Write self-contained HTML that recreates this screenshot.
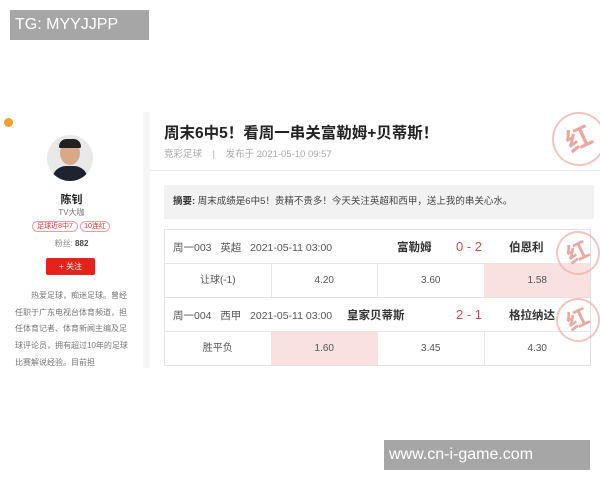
<!DOCTYPE html>
<html><head><meta charset="utf-8"><style>
*{margin:0;padding:0;box-sizing:border-box}
body{width:600px;height:480px;background:#fff;position:relative;overflow:hidden;font-family:"Liberation Sans","Noto Sans CJK SC",sans-serif;color:#333}
.a{position:absolute}
.tg{left:10px;top:10px;width:139px;height:30px;background:#a6a6a6;color:#fff;font-size:16px;line-height:30px;padding-left:5px}
.wm{left:384px;top:440px;width:206px;height:30px;background:#a6a6a6;color:#fff;font-size:16px;line-height:30px;padding-left:5px}
.strip{left:143px;top:112px;width:7px;height:256px;background:#f5f5f5}
.c{text-align:center}
.tbl{left:164px;width:427px;border:1px solid #e2e2e2;background:#fff}
.row1{height:34px;border-bottom:1px solid #e6e6e6;position:relative;font-size:10.5px}
.row2{height:33px;display:flex}
.row2 div{flex:1;border-right:1px solid #e6e6e6;text-align:center;line-height:33px;font-size:10px;color:#555}
.row2 div:last-child{border-right:none}
.pk{background:#f9e1e1}
.stamp{width:44px;height:44px;border:2px solid #eeb2ad;border-radius:50%;color:#e58a83;font-size:22px;font-weight:bold;text-align:center;line-height:40px;transform:rotate(-25deg);opacity:.75}
.sc{color:#c0504d;font-size:13px;top:9px;left:291px}
.tm{top:9px;font-weight:bold;font-size:11.5px}
</style></head><body>
<div class="a tg">TG: MYYJJPP</div>
<div class="a" style="left:4px;top:118px;width:9px;height:9px;border-radius:50%;background:#f0a030"></div>
<div class="a" style="left:47px;top:135px;width:46px;height:46px;border-radius:50%;background:#e9e9ea;overflow:hidden">
 <div class="a" style="left:13px;top:6px;width:20px;height:24px;border-radius:50%;background:#d9a889"></div>
 <div class="a" style="left:12px;top:4px;width:22px;height:9px;border-radius:10px 10px 2px 2px;background:#222"></div>
 <div class="a" style="left:5px;top:31px;width:36px;height:20px;border-radius:14px 14px 0 0;background:#1f2330"></div>
</div>
<div class="a c" style="left:0;top:191px;width:143px;font-size:11px;font-weight:bold;color:#222">陈钊</div>
<div class="a c" style="left:0;top:207px;width:143px;font-size:8px;color:#777">TV大咖</div>
<div class="a" style="left:32px;top:221px;width:46px;height:11px;border:1px solid #e7a0a0;border-radius:6px;font-size:7px;color:#d33;text-align:center;line-height:9px">足球近8中7</div>
<div class="a" style="left:80px;top:221px;width:30px;height:11px;border:1px solid #e7a0a0;border-radius:6px;font-size:7px;color:#d33;text-align:center;line-height:9px">10连红</div>
<div class="a c" style="left:0;top:238px;width:143px;font-size:8px;color:#888">粉丝: <b style="color:#444">882</b></div>
<div class="a c" style="left:46px;top:258px;width:49px;height:17px;background:#e5231b;border-radius:2px;color:#fff;font-size:8px;line-height:17px">+ 关注</div>
<div class="a" style="left:15px;top:288px;width:116px;font-size:8px;line-height:16.7px;color:#777;text-indent:16px">热爱足球，痴迷足球。曾经任职于广东电视台体育频道，担任体育记者、体育新闻主编及足球评论员，拥有超过10年的足球比赛解说经验。目前担</div>
<div class="a strip"></div>
<div class="a" style="left:150px;top:170px;width:450px;height:1px;background:#ebebeb"></div>
<div class="a" style="left:164px;top:121px;font-size:15.5px;font-weight:bold;color:#222;white-space:nowrap">周末6中5！看周一串关富勒姆+贝蒂斯！</div>
<div class="a" style="left:164px;top:146px;font-size:9.5px;color:#aaa;white-space:nowrap">竞彩足球 &nbsp;&nbsp;&nbsp;| &nbsp;&nbsp;&nbsp;发布于 2021-05-10 09:57</div>
<div class="a stamp" style="left:552px;top:112px;width:54px;height:54px;line-height:50px;font-size:26px">红</div>
<div class="a" style="left:164px;top:185px;width:430px;height:34px;background:#f2f2f2;font-size:9.5px;line-height:34px;padding-left:9px;color:#444"><b style="color:#333">摘要:</b> 周末成绩是6中5！贵精不贵多！今天关注英超和西甲，送上我的串关心水。</div>
<div class="a tbl" style="top:229px">
 <div class="row1"><span class="a" style="left:8px;top:10px;color:#555">周一003 &nbsp;&nbsp;英超 &nbsp;&nbsp;2021-05-11 03:00</span><span class="a tm" style="left:232px">富勒姆</span><span class="a sc">0 - 2</span><span class="a tm" style="left:344px">伯恩利</span></div>
 <div class="row2"><div>让球(-1)</div><div>4.20</div><div>3.60</div><div class="pk">1.58</div></div>
</div>
<div class="a tbl" style="top:297px">
 <div class="row1"><span class="a" style="left:8px;top:10px;color:#555">周一004 &nbsp;&nbsp;西甲 &nbsp;&nbsp;2021-05-11 03:00</span><span class="a tm" style="left:182px">皇家贝蒂斯</span><span class="a sc">2 - 1</span><span class="a tm" style="left:344px">格拉纳达</span></div>
 <div class="row2"><div>胜平负</div><div class="pk">1.60</div><div>3.45</div><div>4.30</div></div>
</div>
<div class="a stamp" style="left:556px;top:231px">红</div>
<div class="a stamp" style="left:556px;top:298px">红</div>
<div class="a wm">www.cn-i-game.com</div>
</body></html>
